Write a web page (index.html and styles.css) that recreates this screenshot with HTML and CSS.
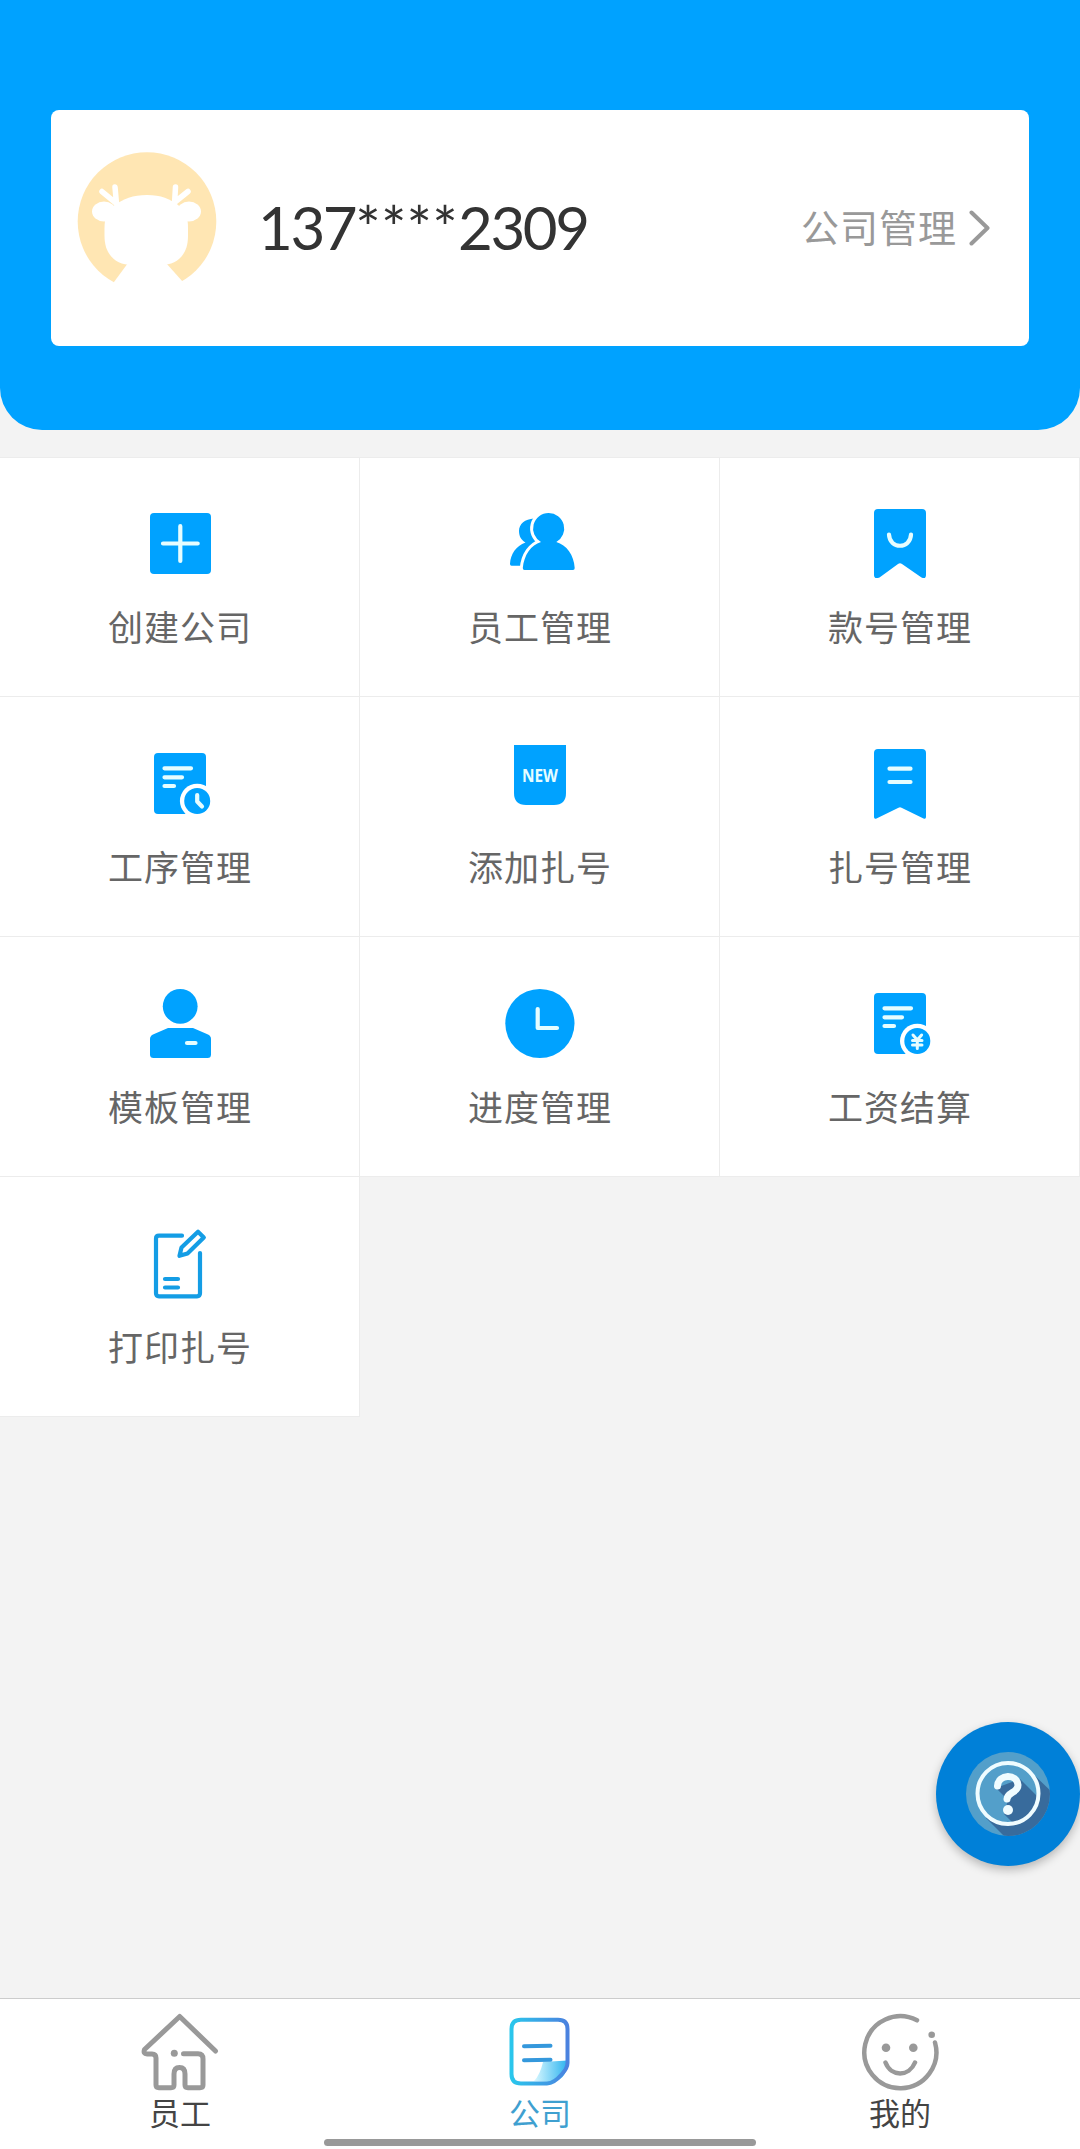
FILE: index.html
```html
<!DOCTYPE html>
<html lang="zh-CN">
<head>
  <meta charset="UTF-8" />
  <meta name="viewport" content="width=device-width, initial-scale=1.0" />
  <title>公司</title>
  <link rel="stylesheet" href="styles.css">
</head>
<body>

  <!-- Account card -->
  <header>
    <div class="card">
      <svg class="avatar" viewBox="0 0 140 140">
        <circle cx="70" cy="69.5" r="69.3" fill="#ffe6b3" />
        <g fill="#fff">
          <path d="M70 43C84 43 93 47 101 53C109 59 111 66 111 76V84C111 103 100 113 84 113H55C39 113 27.500 103 27.500 84V76C27.500 66 30 59 38 53C46 47 56 43 70 43Z" />
          <ellipse cx="27" cy="59.500" rx="12" ry="10" />
          <ellipse cx="112" cy="59.500" rx="12" ry="10" />
          <path d="M51 111L37 130V140H106V130L89 111Z" />
        </g>
        <path d="M38 35L39.500 52M25 39.500L39 51M98.500 35L97.500 52M111 39.500L98 50" fill="none" stroke="#fff" stroke-width="5.500" stroke-linecap="round" />
      </svg>
      <span class="phone">137<span class="mask">****</span>2309</span>
      <a class="manage" href="#">
        <span>公司管理</span>
        <svg viewBox="0 0 22 36"><path d="M2.500 2.500L18.500 18L2.500 33.500" fill="none" stroke="#999" stroke-width="4" stroke-linecap="round" stroke-linejoin="round" /></svg>
      </a>
    </div>
  </header>

  <!-- Menu grid -->
  <main class="grid">
    <a class="cell" href="#">
      <svg class="icon" viewBox="0 0 100 100">
        <rect x="20" y="23" width="61" height="61" rx="4" />
        <path class="line" d="M33 53.500H67.700M50.300 36.200V71" />
      </svg>
      <span>创建公司</span>
    </a>
    <a class="cell" href="#">
      <svg class="icon" viewBox="0 0 100 100">
        <path d="M44 28.500C35 29 29 34 29 41C29 46 31 50 35.500 52.500C26 56 20.500 64 20 74Q20 75.700 21.500 75.700H40L54 50Z" />
        <path d="M58.600 23A15.500 15.500 0 0 1 66.300 52C76.500 55 84 65 84.700 78Q84.700 80 83 80H34.500Q32.700 80 32.800 78C34 65 41 55 51 52A15.500 15.500 0 0 1 58.600 23Z" stroke="#fff" stroke-width="6" paint-order="stroke" />
      </svg>
      <span>员工管理</span>
    </a>
    <a class="cell" href="#">
      <svg class="icon" viewBox="0 0 100 100">
        <path d="M28 19H72Q76 19 76 23V85Q76 89.500 71.500 87.500L52 74Q50 72.500 48 74L29.500 87.500Q24 89.500 24 85V23Q24 19 28 19Z" />
        <path class="line" d="M39 44.500C39.500 59.500 60.500 59.500 61 44.500" />
      </svg>
      <span>款号管理</span>
    </a>
    <a class="cell" href="#">
      <svg class="icon" viewBox="0 0 100 100">
        <rect x="24" y="23" width="52" height="61" rx="4" />
        <path class="line" d="M34.500 38.300H61M34.500 47.300H52M34.500 56H44" />
        <circle cx="67.200" cy="71" r="17.300" fill="#fff" />
        <circle cx="67.200" cy="71" r="13" />
        <path class="line" d="M67.200 65V71.500L72 76.500" />
      </svg>
      <span>工序管理</span>
    </a>
    <a class="cell" href="#">
      <svg class="icon" viewBox="0 0 100 100">
        <path d="M24 15H76V63Q76 75 64 75H36Q24 75 24 63Z" />
        <text class="new" x="32" y="52" textLength="36" lengthAdjust="spacingAndGlyphs">NEW</text>
      </svg>
      <span>添加扎号</span>
    </a>
    <a class="cell" href="#">
      <svg class="icon" viewBox="0 0 100 100">
        <path d="M28 19H72Q76 19 76 23V87Q76 89.500 73.500 88.500L51.500 77.700Q50 77 48.500 77.700L26.500 88.500Q24 89.500 24 87V23Q24 19 28 19Z" />
        <path class="line" d="M39.500 38.700H60.500M39.500 52H60.500" />
      </svg>
      <span>扎号管理</span>
    </a>
    <a class="cell" href="#">
      <svg class="icon" viewBox="0 0 100 100">
        <circle cx="50.200" cy="36.300" r="17.400" />
        <path d="M38 58H63L78 64.500Q81 66 81 69V84.500Q81 88 77.500 88H23.500Q20 88 20 84.500V69Q20 66 23 64.500Z" />
        <path class="line" d="M57 73H65.500" />
      </svg>
      <span>模板管理</span>
    </a>
    <a class="cell" href="#">
      <svg class="icon" viewBox="0 0 100 100">
        <circle cx="49.900" cy="53.500" r="34.600" />
        <path class="line" d="M47.700 39V58H67" />
      </svg>
      <span>进度管理</span>
    </a>
    <a class="cell" href="#">
      <svg class="icon" viewBox="0 0 100 100">
        <rect x="24" y="23" width="52" height="61" rx="4" />
        <path class="line" d="M34.500 38.300H61M34.500 47.300H52M34.500 56H44" />
        <circle cx="67.300" cy="71" r="17.300" fill="#fff" />
        <circle cx="67.300" cy="71" r="13" />
        <path class="line yen" d="M63 65L67.300 70L71.600 65M67.300 70V78.500M62.500 70.500H72M62.500 75H72" />
      </svg>
      <span>工资结算</span>
    </a>
    <a class="cell" href="#">
      <svg class="icon outline" viewBox="0 0 100 100">
        <path d="M52 25.700H29Q26 25.700 26 28.700V83.300Q26 86.300 29 86.300H67Q70 86.300 70 83.300V43" />
        <path d="M35 69H48M35 77.500H48" />
        <path d="M49.500 45.800L51.500 37.500L68 21.800L73.800 27.500L57.500 43.500Z" />
      </svg>
      <span>打印扎号</span>
    </a>
  </main>

  <!-- Floating help button -->
  <a class="help" href="#">
    <svg viewBox="0 0 144 144">
      <clipPath id="disc"><circle cx="72" cy="72" r="42" /></clipPath>
      <clipPath id="inner"><circle cx="72" cy="71.500" r="30" /></clipPath>
      <circle cx="72" cy="72" r="42" fill="#539fca" />
      <path d="M50 96L72 118H120V74L94 49Z" fill="#386b9c" clip-path="url(#disc)" />
      <circle cx="72" cy="71.500" r="30.500" fill="#539fca" />
      <path d="M60 66L84 57L108 81V106H82L68 92L72 78Z" fill="#386b9c" clip-path="url(#inner)" />
      <circle cx="72" cy="71.500" r="30.500" fill="none" stroke="#effcff" stroke-width="4" />
      <path d="M61.500 64C62.500 51.500 81 51.500 82 63C82 71 71.500 70 71 77" fill="none" stroke="#effcff" stroke-width="7" stroke-linecap="round" />
      <circle cx="72" cy="88" r="5" fill="#effcff" />
    </svg>
  </a>

  <!-- Bottom tabs -->
  <nav>
    <a href="#">
      <svg class="tab-icon" viewBox="0 0 80 80">
        <path d="M75.500 39L39.700 4.500L4.500 37.500Q3 42 7 42H12Q16 42 16 46V73Q16 75.700 19 75.700H31Q34 75.700 34 73V62Q34 55.500 39.500 55.500Q45 55.500 45 62V73Q45 75.700 48 75.700H60Q63 75.700 63 73V47Q63 41.700 58 41.700H43.500" />
        <circle class="dot" cx="34.300" cy="41.300" r="3.500" />
      </svg>
      <span>员工</span>
    </a>
    <a class="active" href="#">
      <svg class="tab-icon company" viewBox="0 0 80 80">
        <defs>
          <linearGradient id="edge"><stop offset="0" stop-color="#2ac6ec" /><stop offset="1" stop-color="#4b82df" /></linearGradient>
          <linearGradient id="fold"><stop offset="0" stop-color="#d9f8ff" /><stop offset="1" stop-color="#2fb4ef" /></linearGradient>
        </defs>
        <path class="fold" d="M43 50L67 48.500Q68 70 48 70L34 69Q40 63 43 50Z" />
        <path class="edge" d="M21 7.700H58Q67.500 7.700 67.500 17V51Q67.500 56 62 62Q54 71.500 47 71.500H21Q11.500 71.500 11.500 62V17Q11.500 7.700 21 7.700Z" />
        <path d="M24 34.300L50.500 33.700M24 48.300L50.500 47.700" />
      </svg>
      <span>公司</span>
    </a>
    <a href="#">
      <svg class="tab-icon face" viewBox="0 0 80 80">
        <path d="M57 8.300A36 36 0 1 0 75 30.500M25.500 50.500C31 65 49 65 55 50.500" />
        <circle class="dot" cx="71.700" cy="22.700" r="3.300" />
        <circle class="dot" cx="26" cy="35.700" r="4.300" />
        <circle class="dot" cx="53.300" cy="35.700" r="4.300" />
      </svg>
      <span>我的</span>
    </a>
    <div class="home-bar"></div>
  </nav>

</body>
</html>
```

FILE: styles.css
```css
* {
  box-sizing: border-box;
}
body {
  font-family: "Noto Sans CJK SC", sans-serif;
  margin: 0;
  min-height: 2149px;
  display: flex;
  flex-direction: column;
  background-color: #f3f3f3;
}
a {
  color: inherit;
  text-decoration: none;
}
svg {
  display: block;
  flex: none;
}
header {
  height: 430px;
  padding: 110px 51px 0;
  background-color: #00a2ff;
  border-radius: 0 0 42px 42px;
}
.card {
  height: 236px;
  padding: 0 38px 8px 26px;
  display: flex;
  align-items: center;
  background-color: white;
  border-radius: 8px;
}
.avatar {
  width: 140px;
  height: 140px;
  margin-top: -4px;
}
.phone {
  margin-left: 41px;
  font-family: Lato, sans-serif;
  font-size: 60px;
  line-height: 72px;
  letter-spacing: -2.4px;
  color: #333;
  margin-top: 5px;
}
.mask {
  letter-spacing: 0.2px;
}
.manage {
  margin-left: auto;
  margin-top: 8px;
  display: flex;
  align-items: center;
  gap: 12px;
  font-size: 38px;
  letter-spacing: 1px;
  line-height: 56px;
  color: #999;
}
.manage span {
  margin-top: -4px;
}
.manage svg {
  width: 22px;
  height: 36px;
}

/* Menu grid */
.grid {
  margin-top: 27px;
  display: grid;
  grid-template-columns: repeat(3, 360px);
  grid-template-rows: 239px;
  grid-auto-rows: 240px;
  border-top: 1px solid #ececec;
}
.cell {
  padding: 0 0 20px 1px;
  display: flex;
  flex-direction: column;
  align-items: center;
  justify-content: flex-end;
  gap: 12px;
  padding-bottom: 46px;
  background-color: white;
  border-right: 1px solid #ececec;
  border-bottom: 1px solid #ececec;
  font-size: 35px;
  line-height: 48px;
  letter-spacing: 1px;
  color: #666;
}
.icon {
  width: 100px;
  height: 100px;
  fill: #00a2ff;
}
.icon .line {
  fill: none;
  stroke: #e6fdff;
  stroke-width: 4.2;
  stroke-linecap: round;
  stroke-linejoin: round;
}
.icon .yen {
  stroke-width: 3;
}
.icon .new {
  fill: #e6fdff;
  font-family: "Noto Sans", sans-serif;
  font-size: 18px;
  font-weight: bold;
  letter-spacing: 0;
}
.outline {
  fill: none;
  stroke: #149de5;
  stroke-width: 4.2;
  stroke-linecap: round;
  stroke-linejoin: round;
}

/* Help button */
.help {
  position: absolute;
  top: 1722px;
  right: 0;
  width: 144px;
  height: 144px;
  border-radius: 50%;
  background-color: #0080d8;
  box-shadow: 0 4px 10px rgba(0, 0, 0, 0.25);
}

/* Bottom tabs */
nav {
  position: relative;
  margin-top: auto;
  height: 151px;
  padding-top: 13px;
  display: flex;
  background-color: white;
  border-top: 1px solid #ccc;
}
nav a {
  flex: 1;
  display: flex;
  flex-direction: column;
  align-items: center;
  font-size: 31px;
  line-height: 39px;
  color: #444;
}
nav .active {
  color: #3fa0d0;
}
.tab-icon {
  width: 80px;
  height: 80px;
  fill: none;
  stroke: #999;
  stroke-width: 5;
  stroke-linecap: round;
  stroke-linejoin: round;
}
.tab-icon .dot {
  fill: #999;
  stroke: none;
}
.company {
  stroke: #3498dc;
  stroke-width: 4;
}
.company .edge {
  stroke: url(#edge);
}
.company .fold {
  fill: url(#fold);
  stroke: none;
}
.face {
  stroke-width: 4.5;
}
.home-bar {
  position: absolute;
  left: 324px;
  bottom: 3px;
  width: 432px;
  height: 7px;
  border-radius: 4px;
  background-color: #999;
}
```
